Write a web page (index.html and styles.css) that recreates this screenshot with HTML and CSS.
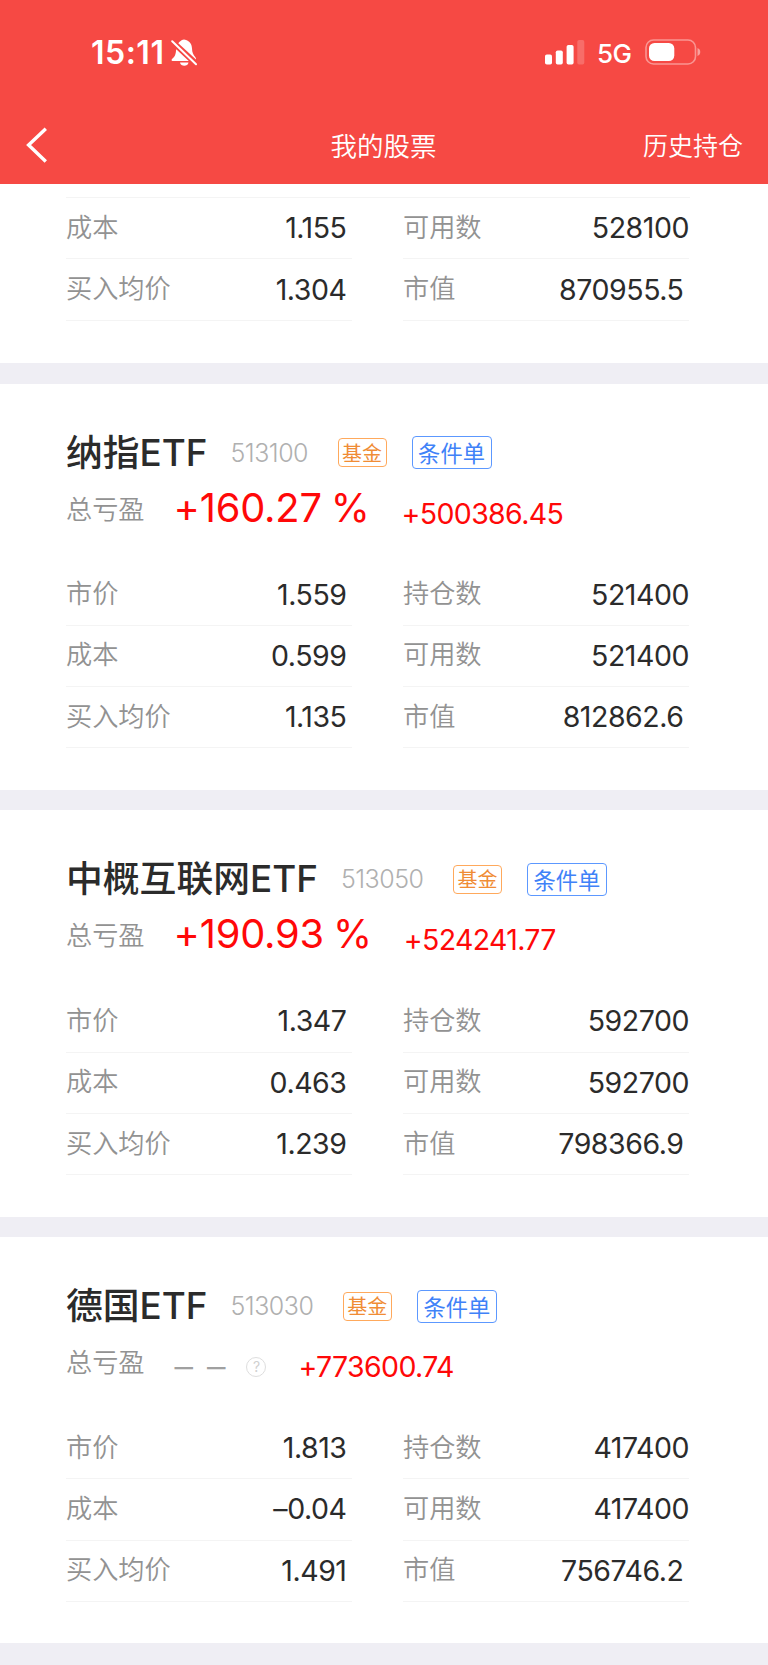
FILE: index.html
```html
<!DOCTYPE html>
<html lang="zh-CN">
<head>
    <meta charset="UTF-8">
    <meta name="viewport" content="width=device-width, initial-scale=1.0">
    <title>我的股票</title>
    <link rel="stylesheet" href="styles.css">
</head>
<body>
    <!-- Header -->
    <header class="header">
        <div class="status-bar">
            <div class="status-left">
                <span class="time">15:11</span>
                <svg class="bell" width="26" height="28" viewBox="0 0 26 28">
                    <path d="M5.2 10.2 17.8 22H1.6C.4 22 .2 20.6 1.2 19.8 4 17.5 4.7 15.5 5.2 10.2Z" fill="#fff"/>
                    <path d="M7.3 4.3C8.6 2.6 10.2 1.6 11 1.1 12 .2 14 .2 15 1.1 18.5 2.3 20.8 5 21 9.5 21.2 13.5 22 15.6 24.4 18.2 25 19 25.2 19.8 25 20.6Z" fill="#fff"/>
                    <path d="M9 23.6h8.5c-.6 4.3-7.9 4.3-8.5 0Z" fill="#fff"/>
                    <path d="M1.2 2.2 25 25.3" stroke="#f64944" stroke-width="4"/>
                    <path d="M1.2 2.2 25 25.3" stroke="#fff" stroke-width="2" stroke-linecap="round"/>
                </svg>
            </div>
            <div class="status-right">
                <svg class="signal" width="40" height="25" viewBox="0 0 40 25" fill="#fff">
                    <rect x="0" y="14.5" width="7" height="10" rx="1.8"/>
                    <rect x="10.8" y="10.5" width="7" height="14" rx="1.8"/>
                    <rect x="21.6" y="5" width="7" height="19.5" rx="1.8"/>
                    <rect x="32.3" y="0" width="7" height="24.5" rx="1.8" opacity=".2"/>
                </svg>
                <span class="network">5G</span>
                <svg class="battery" width="56" height="26" viewBox="0 0 56 26">
                    <rect x="1" y="1" width="49.5" height="24" rx="7.5" fill="none" stroke="#fff" stroke-opacity=".42" stroke-width="1.6"/>
                    <rect x="4" y="4" width="25.3" height="18" rx="5.5" fill="#fff"/>
                    <path d="M52.5 9v8c3.7-1.3 3.7-6.7 0-8Z" fill="#fff" fill-opacity=".48"/>
                </svg>
            </div>
        </div>
        <nav class="nav-bar">
            <a href="#" class="back">
                <svg width="24" height="38" viewBox="0 0 24 38">
                    <path d="M21.8 2.8 4.6 19l17.2 16.4" fill="none" stroke="#fff" stroke-width="3.4"/>
                </svg>
            </a>
            <h1 class="nav-title">我的股票</h1>
            <a href="#" class="history">历史持仓</a>
        </nav>
    </header>

    <!-- Stock list -->
    <main class="stock-list">
        <section class="card card-partial">
            <div class="details">
                <div class="row"><span class="label">成本</span><span class="value">1.155</span></div>
                <div class="row"><span class="label">可用数</span><span class="value">528100</span></div>
                <div class="row"><span class="label">买入均价</span><span class="value">1.304</span></div>
                <div class="row market"><span class="label">市值</span><span class="value">870955.5</span></div>
            </div>
        </section>

        <section class="card">
            <div class="card-title">
                <h2 class="name">纳指ETF</h2>
                <span class="code">513100</span>
                <span class="tag fund">基金</span>
                <span class="tag order">条件单</span>
            </div>
            <div class="profit">
                <span class="label">总亏盈</span>
                <span class="percent">+160.27 %</span>
                <span class="amount">+500386.45</span>
            </div>
            <div class="details">
                <div class="row"><span class="label">市价</span><span class="value">1.559</span></div>
                <div class="row"><span class="label">持仓数</span><span class="value">521400</span></div>
                <div class="row"><span class="label">成本</span><span class="value">0.599</span></div>
                <div class="row"><span class="label">可用数</span><span class="value">521400</span></div>
                <div class="row"><span class="label">买入均价</span><span class="value">1.135</span></div>
                <div class="row market"><span class="label">市值</span><span class="value">812862.6</span></div>
            </div>
        </section>

        <section class="card">
            <div class="card-title">
                <h2 class="name">中概互联网ETF</h2>
                <span class="code">513050</span>
                <span class="tag fund">基金</span>
                <span class="tag order">条件单</span>
            </div>
            <div class="profit">
                <span class="label">总亏盈</span>
                <span class="percent">+190.93 %</span>
                <span class="amount">+524241.77</span>
            </div>
            <div class="details">
                <div class="row"><span class="label">市价</span><span class="value">1.347</span></div>
                <div class="row"><span class="label">持仓数</span><span class="value">592700</span></div>
                <div class="row"><span class="label">成本</span><span class="value">0.463</span></div>
                <div class="row"><span class="label">可用数</span><span class="value">592700</span></div>
                <div class="row"><span class="label">买入均价</span><span class="value">1.239</span></div>
                <div class="row market"><span class="label">市值</span><span class="value">798366.9</span></div>
            </div>
        </section>

        <section class="card">
            <div class="card-title">
                <h2 class="name">德国ETF</h2>
                <span class="code">513030</span>
                <span class="tag fund">基金</span>
                <span class="tag order">条件单</span>
            </div>
            <div class="profit">
                <span class="label">总亏盈</span>
                <span class="no-percent">– –</span>
                <span class="help">?</span>
                <span class="amount">+773600.74</span>
            </div>
            <div class="details">
                <div class="row"><span class="label">市价</span><span class="value">1.813</span></div>
                <div class="row"><span class="label">持仓数</span><span class="value">417400</span></div>
                <div class="row"><span class="label">成本</span><span class="value">–0.04</span></div>
                <div class="row"><span class="label">可用数</span><span class="value">417400</span></div>
                <div class="row"><span class="label">买入均价</span><span class="value">1.491</span></div>
                <div class="row market"><span class="label">市值</span><span class="value">756746.2</span></div>
            </div>
        </section>
    </main>
</body>
</html>
```

FILE: styles.css
```css
/* Global Styles */
* {
    box-sizing: border-box;
}

body {
    font-family: Inter, "Noto Sans CJK SC", sans-serif;
    margin: 0;
    padding: 0;
    background-color: #efeef4;
    color: #2b2b2b;
}

a {
    color: inherit;
    text-decoration: none;
}

h1,
h2 {
    margin: 0;
}

/* Header */
.header {
    height: 184px;
    background-color: #f64944;
    color: white;
}

.status-bar {
    display: flex;
    justify-content: space-between;
    height: 106px;
    padding: 38px 67px 0 91px;
}

.status-left,
.status-right {
    display: flex;
    height: 28px;
}

.time {
    font-size: 32px;
    font-weight: 600;
    line-height: 30px;
    letter-spacing: 0.5px;
}

.status-left {
    gap: 7px;
}

.bell {
    margin-top: 1px;
}

.signal {
    margin-top: 2px;
}

.network {
    width: 34px;
    margin-left: 12px;
    font-size: 26px;
    font-weight: 500;
    line-height: 31px;
    letter-spacing: -0.5px;
}

.battery {
    margin: 1px 0 0 14px;
}

.nav-bar {
    display: grid;
    grid-template-columns: 1fr auto 1fr;
    align-items: center;
    height: 78px;
    padding: 0 25px 0 24px;
    font-family: "Noto Sans CJK SC", sans-serif;
}

.back {
    display: flex;
}

.nav-title {
    margin-top: -2px;
    font-size: 26.5px;
    font-weight: 350;
}

.history {
    margin-top: -2px;
    font-size: 25px;
    font-weight: 350;
    text-align: right;
}

/* Stock card */
.stock-list {
    display: flex;
    flex-direction: column;
    gap: 20.6px;
}

.card {
    height: 406.2px;
    padding: 47px 78px 0 66px;
    background-color: white;
}

.card-partial {
    height: 179px;
    padding-top: 13px;
}

.card-partial .details {
    border-top: 1.5px solid #f4f4f4;
}

.card-title {
    display: flex;
    align-items: center;
    height: 44px;
}

.name {
    font-size: 36.8px;
    font-weight: 500;
    line-height: 44px;
    white-space: nowrap;
}

.code {
    margin-left: 23px;
    font-size: 25px;
    font-weight: 300;
    letter-spacing: -0.5px;
    color: #b0b0b0;
}

.tag {
    display: flex;
    align-items: center;
    justify-content: center;
    padding-bottom: 1px;
    border: 1.5px solid;
    border-radius: 4px;
    font-family: "Noto Sans CJK SC", sans-serif;
}

.fund {
    width: 49px;
    height: 29px;
    margin-left: 29.5px;
    border-color: #ffa95c;
    color: #f08c35;
    font-size: 20px;
}

.order {
    width: 80px;
    height: 33px;
    margin-left: 25px;
    border-color: #5c98ff;
    color: #3f82f8;
    font-size: 22.3px;
}

.label {
    font-family: "Noto Sans CJK SC", sans-serif;
    font-size: 26.2px;
    font-weight: 350;
    color: #929292;
}

/* Total profit line */
.profit {
    display: flex;
    height: 89.8px;
    line-height: 66px;
    color: #ff0808;
}

.percent {
    margin-left: 29px;
    font-size: 39.8px;
    line-height: 66px;
    letter-spacing: -0.2px;
    word-spacing: -2px;
    white-space: pre;
}

.amount {
    margin-left: 32px;
    font-size: 28.5px;
    line-height: 78px;
    letter-spacing: -0.65px;
}

.no-percent {
    margin-left: 30px;
    font-size: 37px;
    font-weight: 300;
    line-height: 78px;
    word-spacing: 3.5px;
    color: #a0a0a0;
}

.help {
    width: 20px;
    height: 20px;
    margin: 29px 0 0 21px;
    border: 1.5px solid #dedede;
    border-radius: 50%;
    font-size: 14px;
    line-height: 17px;
    text-align: center;
    color: #d0d0d0;
}

/* Two column details */
.details {
    display: grid;
    grid-template-columns: 286px 286px;
    column-gap: 51px;
}

.row {
    display: flex;
    align-items: center;
    justify-content: space-between;
    height: 61.35px;
    padding-right: 5.5px;
    border-bottom: 1.5px solid #f4f4f4;
}

.row .label {
    margin-top: -5px;
}

.row:nth-child(even) {
    padding-right: 0;
}

.row.market {
    padding-right: 5.5px;
}

.value {
    margin-top: -1px;
    font-size: 28.5px;
    letter-spacing: -0.45px;
}
```
